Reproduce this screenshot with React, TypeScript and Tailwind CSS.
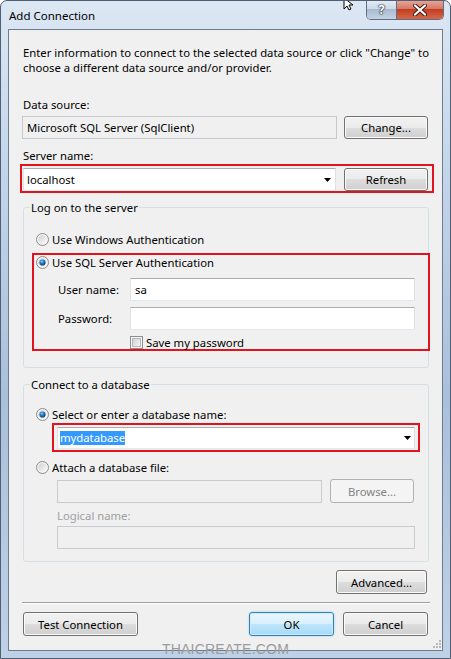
import React from "react";

const btn =
  "flex items-center justify-center rounded-[3px] border border-[#707070] bg-[linear-gradient(#f2f2f2_0%,#ebebeb_50%,#dddddd_50%,#cfcfcf_100%)] shadow-[inset_0_0_0_1px_#fbfbfb]";
const textbox =
  "border border-[#abadb3] border-l-[#e2e3ea] border-r-[#dbdfe6] border-b-[#e3e9ef] bg-white";
const disabledBox = "border border-[#c9cbd0] bg-[#f0f0f0]";

function Radio({ on }: { on?: boolean }) {
  return (
    <svg width="13" height="13" viewBox="0 0 13 13" className="shrink-0">
      <defs>
        <linearGradient id="rg" x1="0" y1="0" x2="1" y2="1">
          <stop offset="0" stopColor="#cfcfcf" />
          <stop offset="1" stopColor="#fbfbfb" />
        </linearGradient>
        <radialGradient id="dot" cx="0.4" cy="0.35" r="0.7">
          <stop offset="0" stopColor="#8ad0ff" />
          <stop offset="0.5" stopColor="#1d6fb8" />
          <stop offset="1" stopColor="#0b3c72" />
        </radialGradient>
      </defs>
      <circle cx="6.5" cy="6.5" r="6" fill="#f4f4f4" stroke="#8b8b8b" />
      <circle cx="6.5" cy="6.5" r="4.3" fill="url(#rg)" />
      {on && <circle cx="6.5" cy="6.5" r="3.1" fill="url(#dot)" />}
    </svg>
  );
}

function Checkbox() {
  return (
    <svg width="13" height="13" viewBox="0 0 13 13" className="shrink-0">
      <defs>
        <linearGradient id="cg" x1="0" y1="0" x2="1" y2="1">
          <stop offset="0" stopColor="#cbcfd5" />
          <stop offset="1" stopColor="#f7f7f7" />
        </linearGradient>
      </defs>
      <rect x="0.5" y="0.5" width="12" height="12" fill="#f4f4f4" stroke="#8e8f8f" />
      <rect x="2.5" y="2.5" width="8" height="8" fill="url(#cg)" stroke="#b6b8bc" />
    </svg>
  );
}

function Arrow() {
  return (
    <svg width="7" height="4" viewBox="0 0 7 4" className="shrink-0">
      <path d="M0 0h7L3.5 4Z" fill="#000" />
    </svg>
  );
}

export default function App() {
  return (
    <div className="relative w-[451px] h-[659px] overflow-hidden rounded-t-[7px] border border-[#4f5f74] bg-[linear-gradient(to_bottom,#dce7f3,#c4d6ea_25%,#a9c0db_60%,#bfd1e6)] font-['Noto_Sans',sans-serif] text-[11.3px] leading-[15px] text-black">
      {/* title bar */}
      <div className="h-[28px] flex items-center pl-[8px] text-[11.5px]">Add Connection</div>

      {/* caption buttons */}
      <div className="absolute top-[-1px] right-[6px] flex h-[20px] rounded-b-[5px] border border-t-0 border-[#5f6f83] overflow-hidden">
        <div className="w-[30px] flex items-center justify-center bg-[linear-gradient(#e6edf5_0%,#cad7e6_50%,#a9bbd0_50%,#c3d3e4_100%)] border-r border-[#5f6f83] text-white font-bold text-[13px] [text-shadow:0_0_1px_#223,0_0_1px_#223,0_0_2px_#223]">
          ?
        </div>
        <div className="w-[46px] flex items-center justify-center bg-[linear-gradient(#e9a99b_0%,#d4735f_50%,#c13e22_50%,#d7674a_100%)]">
          <svg width="16" height="12" viewBox="0 0 16 12">
            <path d="M3 1.5 13 10.5M13 1.5 3 10.5" stroke="#3a1a14" strokeWidth="4" strokeLinecap="round" />
            <path d="M3 1.5 13 10.5M13 1.5 3 10.5" stroke="#fff" strokeWidth="2.2" strokeLinecap="round" />
          </svg>
        </div>
      </div>

      {/* mouse cursor */}
      <svg className="absolute top-[-4px] left-[342px]" width="12" height="14" viewBox="0 0 12 14">
        <path d="M1 1v11l3-3 2 4 2-1-2-4h4Z" fill="#fff" stroke="#000" strokeWidth="1" />
      </svg>

      {/* client area */}
      <div className="mx-[7px] h-[622px] border border-[#6d7c90] bg-[#f0f0f0] px-[14px] pt-[15px] flex flex-col">
        <p className="whitespace-nowrap">
          Enter information to connect to the selected data source or click "Change" to
          <br />
          choose a different data source and/or provider.
        </p>

        <div className="mt-[22px]">Data source:</div>
        <div className="mt-[4px] flex items-center justify-between">
          <div className="-ml-[1px] w-[315px] h-[23px] flex items-center pl-[4px] border border-[#c6c8cc] bg-[#f0f0f0]">
            Microsoft SQL Server (SqlClient)
          </div>
          <button className={`${btn} w-[84px] h-[23px]`}>Change...</button>
        </div>

        <div className="mt-[9px]">Server name:</div>
        <div className="mt-[1px] -ml-[3px] -mr-[6px] h-[29px] border-2 border-[#e0141c] pl-[1px] pr-[4px] pt-[2px] flex justify-between">
          <div className={`${textbox} w-[313px] h-[23px] flex items-center justify-between pl-[3px] pr-[4px]`}>
            <span>localhost</span>
            <Arrow />
          </div>
          <button className={`${btn} w-[84px] h-[23px]`}>Refresh</button>
        </div>

        {/* log on group */}
        <fieldset className="mt-[7px] -mr-[1px] border border-[#d5dfe5] rounded-[3px] pb-[16px]">
          <legend className="ml-[6px] px-[1px]">Log on to the server</legend>
          <div className="mt-[17px] pl-[12px] flex items-center gap-[3px]">
            <Radio />
            <span>Use Windows Authentication</span>
          </div>
          <div className="mt-[6px] ml-[8px] -mr-[2px] h-[98px] border-2 border-[#e0141c] flex flex-col">
            <div className="pl-[2px] flex items-center gap-[3px]">
              <Radio on />
              <span>Use SQL Server Authentication</span>
            </div>
            <div className="mt-[8px] flex items-center pl-[24px] pr-[13px]">
              <span className="w-[72px]">User name:</span>
              <div className={`${textbox} flex-1 h-[23px] flex items-center pl-[4px]`}>sa</div>
            </div>
            <div className="mt-[6px] flex items-center pl-[24px] pr-[13px]">
              <span className="w-[72px]">Password:</span>
              <div className={`${textbox} flex-1 h-[23px]`} />
            </div>
            <div className="mt-[6px] h-[13px] pl-[96px] flex items-center gap-[3px]">
              <Checkbox />
              <span>Save my password</span>
            </div>
          </div>
        </fieldset>

        {/* database group */}
        <fieldset className="mt-[9px] -mr-[1px] border border-[#d5dfe5] rounded-[3px] pb-[12px]">
          <legend className="ml-[6px] px-[1px]">Connect to a database</legend>
          <div className="mt-[15px] pl-[12px] flex items-center gap-[3px]">
            <Radio on />
            <span>Select or enter a database name:</span>
          </div>
          <div className="mt-[1px] ml-[28px] mr-[8px] h-[29px] border-2 border-[#e0141c] px-[3px] pt-[2px]">
            <div className={`${textbox} h-[22px] flex items-center justify-between pl-[2px] pr-[3px]`}>
              <span className="bg-[#3399ff] text-white leading-[14px]">mydatabase</span>
              <Arrow />
            </div>
          </div>
          <div className="mt-[8px] pl-[12px] flex items-center gap-[3px]">
            <Radio />
            <span>Attach a database file:</span>
          </div>
          <div className="mt-[4px] pl-[33px] flex items-center gap-[8px]">
            <div className={`${disabledBox} w-[265px] h-[23px]`} />
            <button className="w-[84px] h-[24px] rounded-[3px] border border-[#adb2b5] bg-[#f4f4f4] text-[#838383]">
              Browse...
            </button>
          </div>
          <div className="mt-[5px] pl-[33px] text-[#a0a0a0]">Logical name:</div>
          <div className="mt-[3px] pl-[33px] pr-[13px]">
            <div className={`${disabledBox} h-[23px]`} />
          </div>
        </fieldset>

        <div className="mt-[8px] flex justify-end pr-[1px]">
          <button className={`${btn} w-[91px] h-[24px]`}>Advanced...</button>
        </div>

        <div className="mt-[8px] -ml-[1px] -mr-[2px] border-t border-[#a0a0a0] border-b border-b-white" />

        <div className="mt-[8px] flex items-center">
          <button className={`${btn} w-[115px] h-[24px]`}>Test Connection</button>
          <div className="flex-1" />
          <button className="w-[85px] h-[24px] rounded-[3px] border border-[#3c7fb1] bg-[linear-gradient(#eaf6fd_0%,#d9f0fc_50%,#bee6fd_50%,#a7d9f5_100%)] shadow-[inset_0_0_0_1px_#c9ecfc,0_0_2px_#7fc8f3]">
            OK
          </button>
          <button className={`${btn} ml-[9px] w-[85px] h-[24px]`}>Cancel</button>
        </div>
      </div>

      {/* resize grip */}
      <svg className="absolute left-[432px] top-[639px]" width="8" height="8" viewBox="0 0 8 8">
        {[
          [6, 0],
          [3, 3],
          [6, 3],
          [0, 6],
          [3, 6],
          [6, 6],
        ].map(([x, y]) => (
          <rect key={`${x}-${y}`} x={x} y={y} width="2" height="2" fill="#b8b8b8" />
        ))}
      </svg>

      {/* watermark */}
      <div className="absolute left-0 right-0 top-[640px] text-center font-['Liberation_Sans',sans-serif] text-[14px] leading-[16px] text-[#9b9b9b] tracking-[0.2px]">
        THAICREATE.COM
      </div>
    </div>
  );
}
